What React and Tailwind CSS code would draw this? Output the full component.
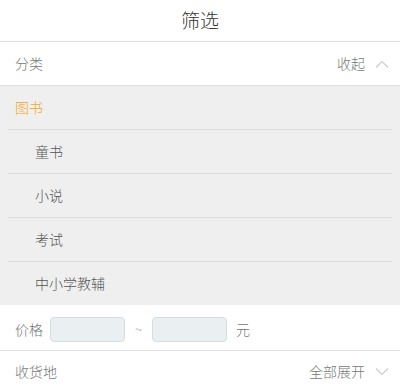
import React from "react";

const font = { fontFamily: '"Noto Sans CJK SC", "Noto Sans", sans-serif' };

function Chevron({ up }) {
  return (
    <svg width="14" height="8" viewBox="0 0 14 8" fill="none" stroke="#cccccc" strokeWidth="1.1" className="ml-2.5">
      {up ? <path d="M1 7.5 L7 1.5 L13 7.5" /> : <path d="M1 0.5 L7 6.5 L13 0.5" />}
    </svg>
  );
}

const subs = ["童书", "小说", "考试", "中小学教辅"];

export default function App() {
  return (
    <div className="w-[400px] h-[392px] overflow-hidden bg-white font-light" style={font}>
      <header className="flex h-[42px] items-center justify-center border-b border-[#dedede]">
        <h1 className="text-[19px] text-[#333]">筛选</h1>
      </header>

      <div className="flex h-[44px] items-center justify-between border-b border-[#dedede] pl-[15px] pr-[11px] text-[14px] text-[#777]">
        <span>分类</span>
        <span className="flex items-center">
          收起
          <Chevron up />
        </span>
      </div>

      <div className="bg-[#efefef]">
        <div className="flex h-[43px] items-center px-[15px] text-[14px] text-[#f5a623]">图书</div>
        {subs.map((s) => (
          <div key={s} className="mx-2 flex h-[44px] items-center border-t border-[#dcdcdc] pl-[27px] text-[14px] text-[#555]">
            {s}
          </div>
        ))}
      </div>

      <div className="flex h-[46px] items-center border-b border-[#e2e2e2] pl-[15px] pt-[3px] text-[14px] text-[#777]">
        <span>价格</span>
        <div className="ml-[7px] h-[25px] w-[75px] rounded-[4px] border border-[#d6dde2] bg-[#eaeff2]" />
        <span className="mx-[10px] text-[13px] text-[#999]">~</span>
        <div className="h-[25px] w-[75px] rounded-[4px] border border-[#d6dde2] bg-[#eaeff2]" />
        <span className="ml-[9px]">元</span>
      </div>

      <div className="flex h-[41px] items-center justify-between pl-[15px] pr-[11px] text-[14px] text-[#777]">
        <span>收货地</span>
        <span className="flex items-center">
          全部展开
          <Chevron />
        </span>
      </div>
    </div>
  );
}
